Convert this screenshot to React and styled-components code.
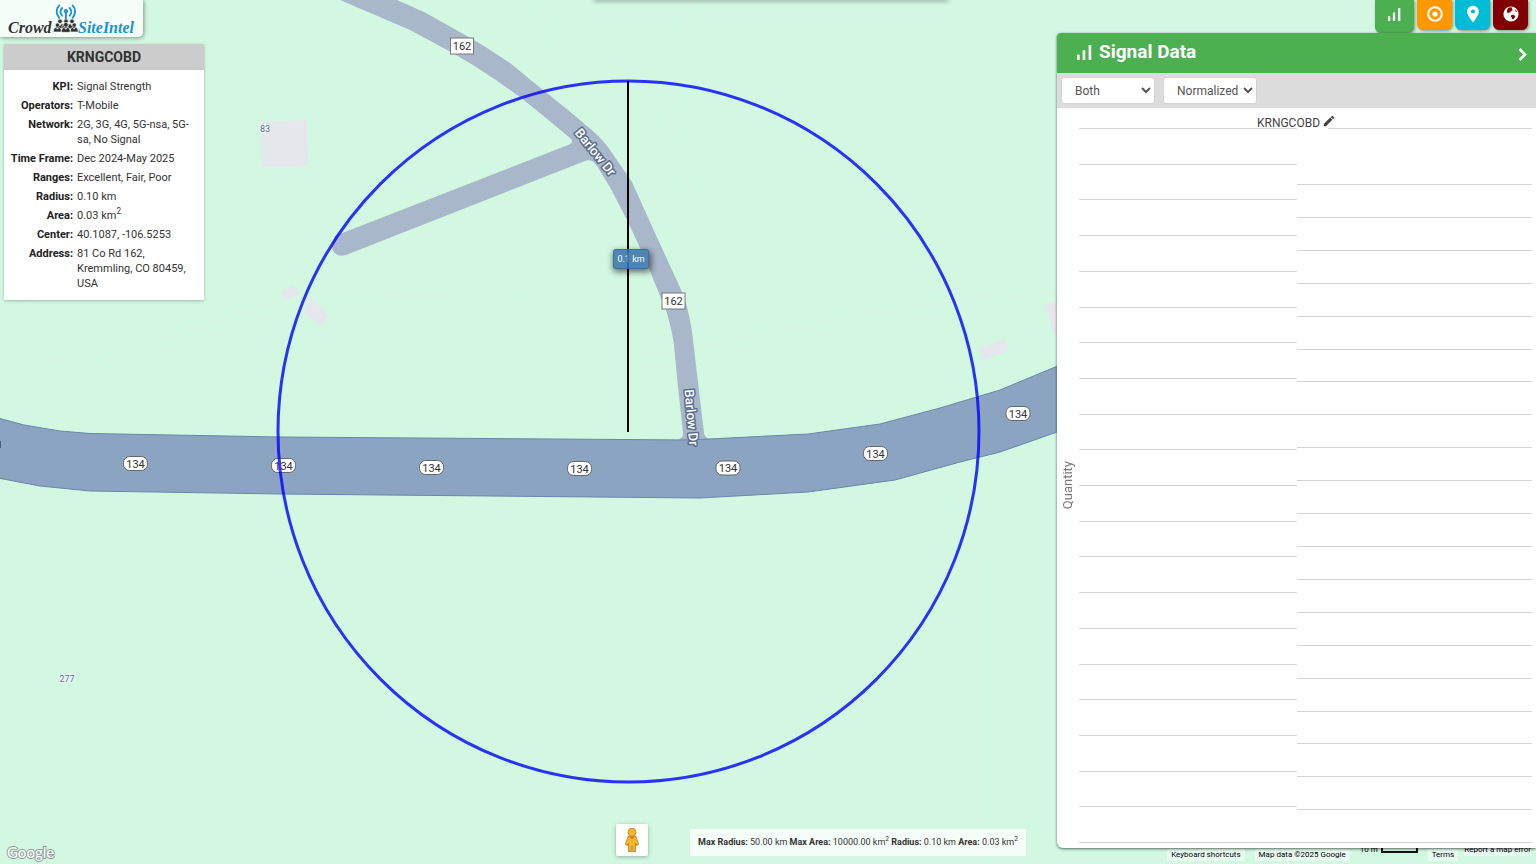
import React from "react";
import styled, { createGlobalStyle, css } from "styled-components";
import { MdLocationOn, MdModeEdit } from "react-icons/md";

const GlobalStyle = createGlobalStyle`
  *, *::before, *::after { box-sizing: border-box; }
  body {
    margin: 0;
    font-family: Roboto, "Liberation Sans", sans-serif;
    font-size: 12px;
    color: #333;
  }
  button, select { font-family: inherit; }
`;

const Page = styled.div`
  position: relative;
  min-height: 100vh;
  overflow: hidden;
  background: #d2f8e2;
`;

const MapCanvas = styled.svg`
  position: absolute;
  inset: 0;
  width: 100%;
  height: 100%;
  font-family: Roboto, sans-serif;
`;

const Overlay = styled.div`
  position: relative;
  display: grid;
  grid-template-columns: 204px 1fr 479px;
  min-height: 100vh;
`;

const LeftColumn = styled.div`
  display: flex;
  flex-direction: column;
  align-items: flex-start;
  gap: 7px;
`;

const LogoBox = styled.div`
  width: 143px;
  height: 37px;
  background: rgba(255, 255, 255, 0.75);
  border-bottom-right-radius: 5px;
  box-shadow: 1px 1px 4px rgba(0, 0, 0, 0.4);
`;

const LogoArt = styled.svg`
  display: block;
  width: 143px;
  height: 37px;
`;

const InfoCard = styled.section`
  width: 200px;
  margin-left: 4px;
  padding-bottom: 9px;
  background: #fff;
  box-shadow: 0 1px 3px rgba(0, 0, 0, 0.25);
`;

const InfoTitle = styled.h1`
  margin: 0 0 9px;
  line-height: 26px;
  font-size: 14px;
  text-align: center;
  background: #ccc;
`;

const InfoList = styled.dl`
  display: grid;
  grid-template-columns: 69px 1fr;
  column-gap: 4px;
  row-gap: 4px;
  margin: 0;
  padding-right: 8px;
  font-size: 11px;
  line-height: 15px;
`;

const InfoLabel = styled.dt`
  font-weight: 700;
  text-align: right;
  white-space: nowrap;
  color: #222;
`;

const InfoValue = styled.dd`
  margin: 0;
`;

const Sup = styled.sup`
  font-size: 75%;
  line-height: 0;
`;

const CenterColumn = styled.div`
  display: flex;
  flex-direction: column;
  justify-content: space-between;
  align-items: flex-end;
`;

const TopDrawer = styled.div`
  align-self: center;
  width: 352px;
  height: 0;
  margin-left: 280px;
  border-radius: 4px;
  box-shadow: 0 0 4px 1px rgba(0, 0, 0, 0.5);
`;

const BottomTools = styled.div`
  display: flex;
  align-items: flex-end;
  gap: 42px;
  margin: 0 31px 8px 0;
`;

const PegmanButton = styled.button`
  display: grid;
  place-items: center;
  width: 32px;
  height: 32px;
  padding: 0;
  border: 0;
  border-radius: 2px;
  background: #fff;
  box-shadow: 0 1px 4px rgba(0, 0, 0, 0.3);
`;

const Limits = styled.p`
  margin: 0;
  padding: 0 8px;
  line-height: 27px;
  font-size: 9px;
  white-space: nowrap;
  background: rgba(255, 255, 255, 0.8);
`;

const RightColumn = styled.div`
  display: flex;
  flex-direction: column;
  padding-bottom: 16px;
`;

const Tabs = styled.nav`
  display: flex;
  justify-content: flex-end;
  align-items: flex-start;
  gap: 3px;
  height: 33px;
  padding-right: 8px;
`;

const Tab = styled.button`
  display: grid;
  place-items: center;
  width: ${(p) => (p.$active ? 39 : 35)}px;
  height: ${(p) => (p.$active ? 33 : 30)}px;
  padding: 0 0 ${(p) => (p.$active ? 4 : 2)}px;
  border: 0;
  border-radius: 0 0 6px 6px;
  color: #fff;
  background: ${(p) => p.$color};
  box-shadow: 1px 1px 3px rgba(0, 0, 0, 0.4);
`;

const Panel = styled.section`
  position: relative;
  display: flex;
  flex: 1;
  flex-direction: column;
  background: #fff;
  border-radius: 4px 0 0 6px;
  box-shadow: 0 1px 3px rgba(0, 0, 0, 0.6);
  overflow: hidden;
`;

const PanelHeader = styled.header`
  display: flex;
  align-items: center;
  height: 40px;
  padding: 0 7px 2px 20px;
  color: #fff;
  background: #4caf50;
`;

const PanelTitle = styled.h2`
  flex: 1;
  margin: 0 0 0 7px;
  font-size: 19px;
  line-height: 38px;
`;

const IconButton = styled.button`
  display: grid;
  place-items: center;
  padding: 0;
  border: 0;
  color: inherit;
  background: none;
`;

const Toolbar = styled.div`
  display: flex;
  align-items: center;
  gap: 8px;
  height: 35px;
  padding: 0 4px;
  background: #dcdcdc;
`;

const Select = styled.select`
  width: 94px;
  height: 27px;
  padding: 0 0 0 9px;
  font-size: 12px;
  color: #555;
  background: #fff;
  border: 1px solid #d4d4d4;
  border-radius: 3px;
`;

const ChartArea = styled.div`
  display: flex;
  flex: 1;
  padding: 0 4px 5px 0;
`;

const AxisLabel = styled.div`
  display: grid;
  place-items: center;
  width: 22px;
  padding: 20px 2px 0 0;
  font-size: 13px;
  color: #777;

  span {
    writing-mode: vertical-rl;
    transform: rotate(180deg);
  }
`;

const ChartBody = styled.div`
  display: flex;
  flex: 1;
  flex-direction: column;
`;

const ChartTitle = styled.div`
  display: flex;
  justify-content: center;
  align-items: flex-end;
  gap: 2px;
  height: 20px;
  margin-right: 18px;
  line-height: 10px;
  color: #444;
`;

const Plot = styled.div`
  display: grid;
  grid-template-columns: 218px 1fr;
  flex: 1;
  border-bottom: 1px solid #d8d8d8;
`;

const gridLine = css`
  border-top: 1px solid #d4d4d4;
`;

const Lines = styled.div`
  display: flex;
  flex-direction: column;
`;

const Cell = styled.div`
  flex: 1;
  ${gridLine}
`;

const FirstCell = styled.div`
  height: 56px;
  margin-left: 31px;
  ${gridLine}
`;

const Attribution = styled.footer`
  position: absolute;
  right: 0;
  bottom: 0;
  display: flex;
  align-items: flex-end;
  height: 20px;
  padding: 0 5px 3px 0;
  font-size: 8px;
  line-height: 12px;
  color: #000;
  white-space: nowrap;
`;

const Credit = styled.span`
  padding: 0 4px;
  margin-right: 10px;
  background: rgba(255, 255, 255, 0.5);
`;

const CreditLink = styled.a`
  padding: 0 4px;
  margin-right: 6px;
  color: inherit;
  text-decoration: none;
  background: rgba(255, 255, 255, 0.5);
`;

const RaisedLink = styled(CreditLink)`
  align-self: flex-start;
  margin-right: 0;
  padding: 0;
`;

const Scale = styled.span`
  display: flex;
  align-items: flex-end;
  align-self: flex-start;
  gap: 3px;
  margin-right: 10px;
`;

const ScaleBar = styled.span`
  width: 37px;
  height: 8px;
  margin-bottom: 3px;
  border: solid #111;
  border-width: 0 2px 2px;
`;

function SignalBars({ size = 16 }) {
  return (
    <svg width={size} height={size} viewBox="0 0 16 16" fill="currentColor">
      <rect x="0" y="10" width="2.8" height="6" rx=".6" />
      <rect x="6" y="5.5" width="2.8" height="10.5" rx=".6" />
      <rect x="12.4" y="0" width="2.8" height="16" rx=".6" />
    </svg>
  );
}

function TargetIcon() {
  return (
    <svg width="16" height="16" viewBox="0 0 16 16">
      <circle cx="8" cy="8" r="6.8" fill="none" stroke="currentColor" strokeWidth="2" />
      <circle cx="8" cy="8" r="2.6" fill="currentColor" />
    </svg>
  );
}

function PinIcon() {
  return <MdLocationOn size={20} />;
}

function GlobeIcon() {
  return (
    <svg width="16" height="16" viewBox="0 0 16 16">
      <circle cx="8" cy="8" r="7.6" fill="currentColor" />
      <path
        d="M5.4 1.8L7.6 1.2L9.2 1.8L8.8 3L9.8 3.8L8.6 5L7.6 5.2L7.4 6.4L6 6.6L5.2 7.4L4.2 6.2L3.8 4.6Z"
        fill="#800000"
      />
      <path
        d="M12 3.2L13.4 4.6L13.8 6L12.6 5.8Z M8.4 9L10.4 8.8L12.4 10.2L11.4 12L10 13.6L9 12.8L8.8 11.4L7.8 10.4Z"
        fill="#800000"
      />
    </svg>
  );
}

const info = [
  ["KPI:", "Signal Strength"],
  ["Operators:", "T-Mobile"],
  ["Network:", "2G, 3G, 4G, 5G-nsa, 5G-sa, No Signal"],
  ["Time Frame:", "Dec 2024-May 2025"],
  ["Ranges:", "Excellent, Fair, Poor"],
  ["Radius:", "0.10 km"],
  ["Area:", <>0.03 km<Sup>2</Sup></>],
  ["Center:", "40.1087, -106.5253"],
  ["Address:", "81 Co Rd 162, Kremmling, CO 80459, USA"],
];

const tabs = [
  { name: "Signal data", color: "#4caf50", Icon: () => <SignalBars size={13} /> },
  { name: "Target", color: "#ff9800", Icon: TargetIcon },
  { name: "Places", color: "#00bcd4", Icon: PinIcon },
  { name: "World", color: "#800000", Icon: GlobeIcon },
];

const highwayShields = [
  [135.5, 463.5],
  [283.5, 465.5],
  [431.5, 467.5],
  [579.5, 468.5],
  [728, 468],
  [875.5, 453.5],
  [1018, 413.5],
];

const roadShields = [
  [462, 46],
  [673.5, 301],
];

function Person({ x, y, s = 1 }) {
  return (
    <g transform={`translate(${x} ${y}) scale(${s})`}>
      <circle cx="0" cy="-3.4" r="2.5" />
      <path d="M-4.6 4.6 C-4.8 1 -3.6 -.4 -1.6 -.6 L0 1.4 L1.6 -.6 C3.6 -.4 4.8 1 4.6 4.6Z" />
    </g>
  );
}

function Logo() {
  return (
    <LogoArt viewBox="0 0 143 37" role="img" aria-label="Crowd SiteIntel">
      <g fill="none" stroke="#2191d0" strokeWidth="1.9" strokeLinecap="round">
        <path d="M62.2 8a5 5 0 0 0 0 7.6M69.6 8a5 5 0 0 1 0 7.6" />
        <path d="M59.2 5.4a9 9 0 0 0 0 12.4M72.6 5.4a9 9 0 0 1 0 12.4" />
        <path d="M65.9 12v7" />
      </g>
      <circle cx="65.9" cy="11.2" r="2.1" fill="#2191d0" />
      <g fill="#333" stroke="#f4fdf8" strokeWidth=".7">
        <Person x={60} y={24.4} s={0.9} />
        <Person x={66} y={24.4} s={0.9} />
        <Person x={72} y={24.4} s={0.9} />
        <Person x={57.4} y={28} s={0.86} />
        <Person x={74.2} y={28} s={0.86} />
        <Person x={65.8} y={28} s={0.95} />
      </g>
      <g
        fontFamily='"Liberation Serif", serif'
        fontWeight="700"
        fontStyle="italic"
        fontSize="16"
      >
        <text x="8" y="33" fill="#333">Crowd</text>
        <text x="78" y="33" fill="#2191d0">SiteIntel</text>
      </g>
    </LogoArt>
  );
}

function SiteMap() {
  return (
    <MapCanvas viewBox="0 0 1536 864" preserveAspectRatio="xMidYMid slice">
      <rect width="1536" height="864" fill="#d2f8e2" />
      <g fill="none" stroke="#dcf0e4" strokeOpacity=".8">
        <path d="M28 300V360L100 366L160 340L290 297H400L530 302L600 335L650 356L740 338L900 308L1056 290" />
        <path d="M536 0L560 50L600 90M700 225L670 120L690 0M695 500V864M950 480L978 560V864" />
      </g>
      <g fill="#e5e7ec">
        <path d="M261 122L307 120L308 166L262 167Z" />
        <path d="M281 292L293 285L300 293L287 300Z" />
        <path d="M306 302L312 299L329 315L322 326L305 314Z" />
        <path d="M979 348L1005 339L1009 351L983 360Z" />
        <path d="M1045 304L1057 302V336L1052 330Z" />
      </g>
      <path
        d="M340 0H397L424 12L467 36L484 46L510 63L538 86L568 110L593 131Q604 141 610 150L632 182L655 233L683 294Q691 318 693 340L704 433Q705 438 710 439L700 448H688L679 439Q683 438 683 433L677 377L674 345Q672 330 666 310L642 252L627 220L611 189L597 166Q592 158 585 161L346 255Q334 258 332 247L335 236L345 232L568 145Q575 142 570 138L546 118L520 97L496 80L473 65L449 51L410 30Z"
        fill="#a9b7ca"
      />
      <path
        d="M-2 418L24 425L60 431L90 433.5L280 437L690 440L808 434L880 424L940 408L1000 390L1060 365V431L1000 452L960 462L895 480L808 492L700 498L280 494L90 491L40 486L-2 478Z"
        fill="#8ba4c1"
        stroke="#6787aa"
      />
      <path d="M0 441V448" stroke="#4a5f7a" strokeWidth="2" />
      <g fontSize="11" textAnchor="middle" fill="#333">
        {roadShields.map(([x, y]) => (
          <g key={x}>
            <rect x={x - 11.5} y={y - 8} width="23" height="16" fill="#fff" stroke="#777" />
            <text x={x} y={y + 4}>162</text>
          </g>
        ))}
        {highwayShields.map(([x, y]) => (
          <g key={x}>
            <rect x={x - 12} y={y - 7} width="24" height="14" rx="6" fill="#fff" stroke="#666" />
            <text x={x} y={y + 4}>134</text>
          </g>
        ))}
      </g>
      <g
        fontSize="13"
        fontWeight="500"
        textAnchor="middle"
        fill="#fff"
        stroke="#5b6d89"
        strokeWidth="3"
        paintOrder="stroke"
        strokeLinejoin="round"
      >
        <text transform="translate(592 155) rotate(51)">Barlow Dr</text>
        <text transform="translate(687 418) rotate(85)">Barlow Dr</text>
      </g>
      <g fontSize="9" textAnchor="middle" fill="#5b7096" stroke="#f0faf6" strokeWidth="2" paintOrder="stroke">
        <text x="265" y="132">83</text>
        <text x="67" y="682">277</text>
      </g>
      <circle cx="628.5" cy="431.5" r="350.5" fill="none" stroke="#0000ff" strokeOpacity=".8" strokeWidth="3" />
      <g>
        <rect x="613" y="251" width="38" height="21" rx="3" fill="#000" opacity=".55" filter="url(#tagShadow)" />
        <rect x="613.5" y="249.5" width="35" height="19" rx="2" fill="#4c86b5" stroke="#3c6f9b" />
        <text x="631" y="262" fontSize="9" textAnchor="middle" fill="#fff">0.1 km</text>
        <path d="M628 81V249M628 269V432" stroke="#000" strokeWidth="2" />
        <path d="M628 249V269" stroke="#2d5b82" strokeOpacity=".7" strokeWidth="2" />
      </g>
      <defs>
        <filter id="tagShadow" x="-40%" y="-50%" width="180%" height="200%">
          <feGaussianBlur stdDeviation="3" />
        </filter>
      </defs>
      <text
        x="7"
        y="858"
        fontSize="15"
        fontWeight="500"
        fontFamily="Lato, sans-serif"
        fill="#fff"
        stroke="#8f9f97"
        strokeWidth="2"
        paintOrder="stroke"
      >
        Google
      </text>
    </MapCanvas>
  );
}

function Pegman() {
  return (
    <svg width="16" height="26" viewBox="0 0 16 26" aria-hidden="true">
      <path
        d="M4 9.5H12L14.5 17.5L12.5 18.5L11.5 16V24.5H8.7V19H7.3V24.5H4.5V16L3.5 18.5L1.5 17.5Z"
        fill="#fbb829"
        stroke="#b9822b"
        strokeWidth=".9"
        strokeLinejoin="round"
      />
      <path d="M5 9.5L8 12.5L11 9.5Z" fill="#e8711c" />
      <circle cx="8" cy="5.3" r="4" fill="#fbb829" stroke="#b9822b" strokeWidth=".9" />
    </svg>
  );
}

export default function App() {
  return (
    <>
      <GlobalStyle />
      <Page>
        <SiteMap />
        <Attribution>
          <Credit>Keyboard shortcuts</Credit>
          <Credit>Map data ©2025 Google</Credit>
          <Scale>
            10 m <ScaleBar />
          </Scale>
          <CreditLink href="#terms">Terms</CreditLink>
          <RaisedLink href="#report">Report a map error</RaisedLink>
        </Attribution>
        <Overlay>
          <LeftColumn>
            <LogoBox>
              <Logo />
            </LogoBox>
            <InfoCard>
              <InfoTitle>KRNGCOBD</InfoTitle>
              <InfoList>
                {info.map(([label, value]) => (
                  <React.Fragment key={label}>
                    <InfoLabel>{label}</InfoLabel>
                    <InfoValue>{value}</InfoValue>
                  </React.Fragment>
                ))}
              </InfoList>
            </InfoCard>
          </LeftColumn>
          <CenterColumn>
            <TopDrawer />
            <BottomTools>
              <PegmanButton aria-label="Street View">
                <Pegman />
              </PegmanButton>
              <Limits>
                <b>Max Radius:</b> 50.00 km <b>Max Area:</b> 10000.00 km<Sup>2</Sup>{" "}
                <b>Radius:</b> 0.10 km <b>Area:</b> 0.03 km<Sup>2</Sup>
              </Limits>
            </BottomTools>
          </CenterColumn>
          <RightColumn>
            <Tabs>
              {tabs.map(({ name, color, Icon }, i) => (
                <Tab key={name} $color={color} $active={i === 0} aria-label={name}>
                  <Icon />
                </Tab>
              ))}
            </Tabs>
            <Panel>
              <PanelHeader>
                <SignalBars size={15} />
                <PanelTitle>Signal Data</PanelTitle>
                <IconButton aria-label="Collapse panel">
                  <svg width="12" height="20" viewBox="0 0 12 20" fill="none">
                    <path d="M2.5 7L8 12.5L2.5 18" stroke="#fff" strokeWidth="2.6" />
                  </svg>
                </IconButton>
              </PanelHeader>
              <Toolbar>
                <Select aria-label="Network type" defaultValue="Both">
                  <option>Both</option>
                </Select>
                <Select aria-label="Scale" defaultValue="Normalized">
                  <option>Normalized</option>
                </Select>
              </Toolbar>
              <ChartArea>
                <AxisLabel>
                  <span>Quantity</span>
                </AxisLabel>
                <ChartBody>
                  <ChartTitle>
                    KRNGCOBD
                    <IconButton aria-label="Rename">
                      <MdModeEdit size={14} />
                    </IconButton>
                  </ChartTitle>
                  <Plot>
                    <Lines>
                      {Array.from({ length: 20 }, (_, i) => (
                        <Cell key={i} />
                      ))}
                    </Lines>
                    <Lines>
                      <FirstCell />
                      {Array.from({ length: 20 }, (_, i) => (
                        <Cell key={i} />
                      ))}
                    </Lines>
                  </Plot>
                </ChartBody>
              </ChartArea>
            </Panel>
          </RightColumn>
        </Overlay>
      </Page>
    </>
  );
}
